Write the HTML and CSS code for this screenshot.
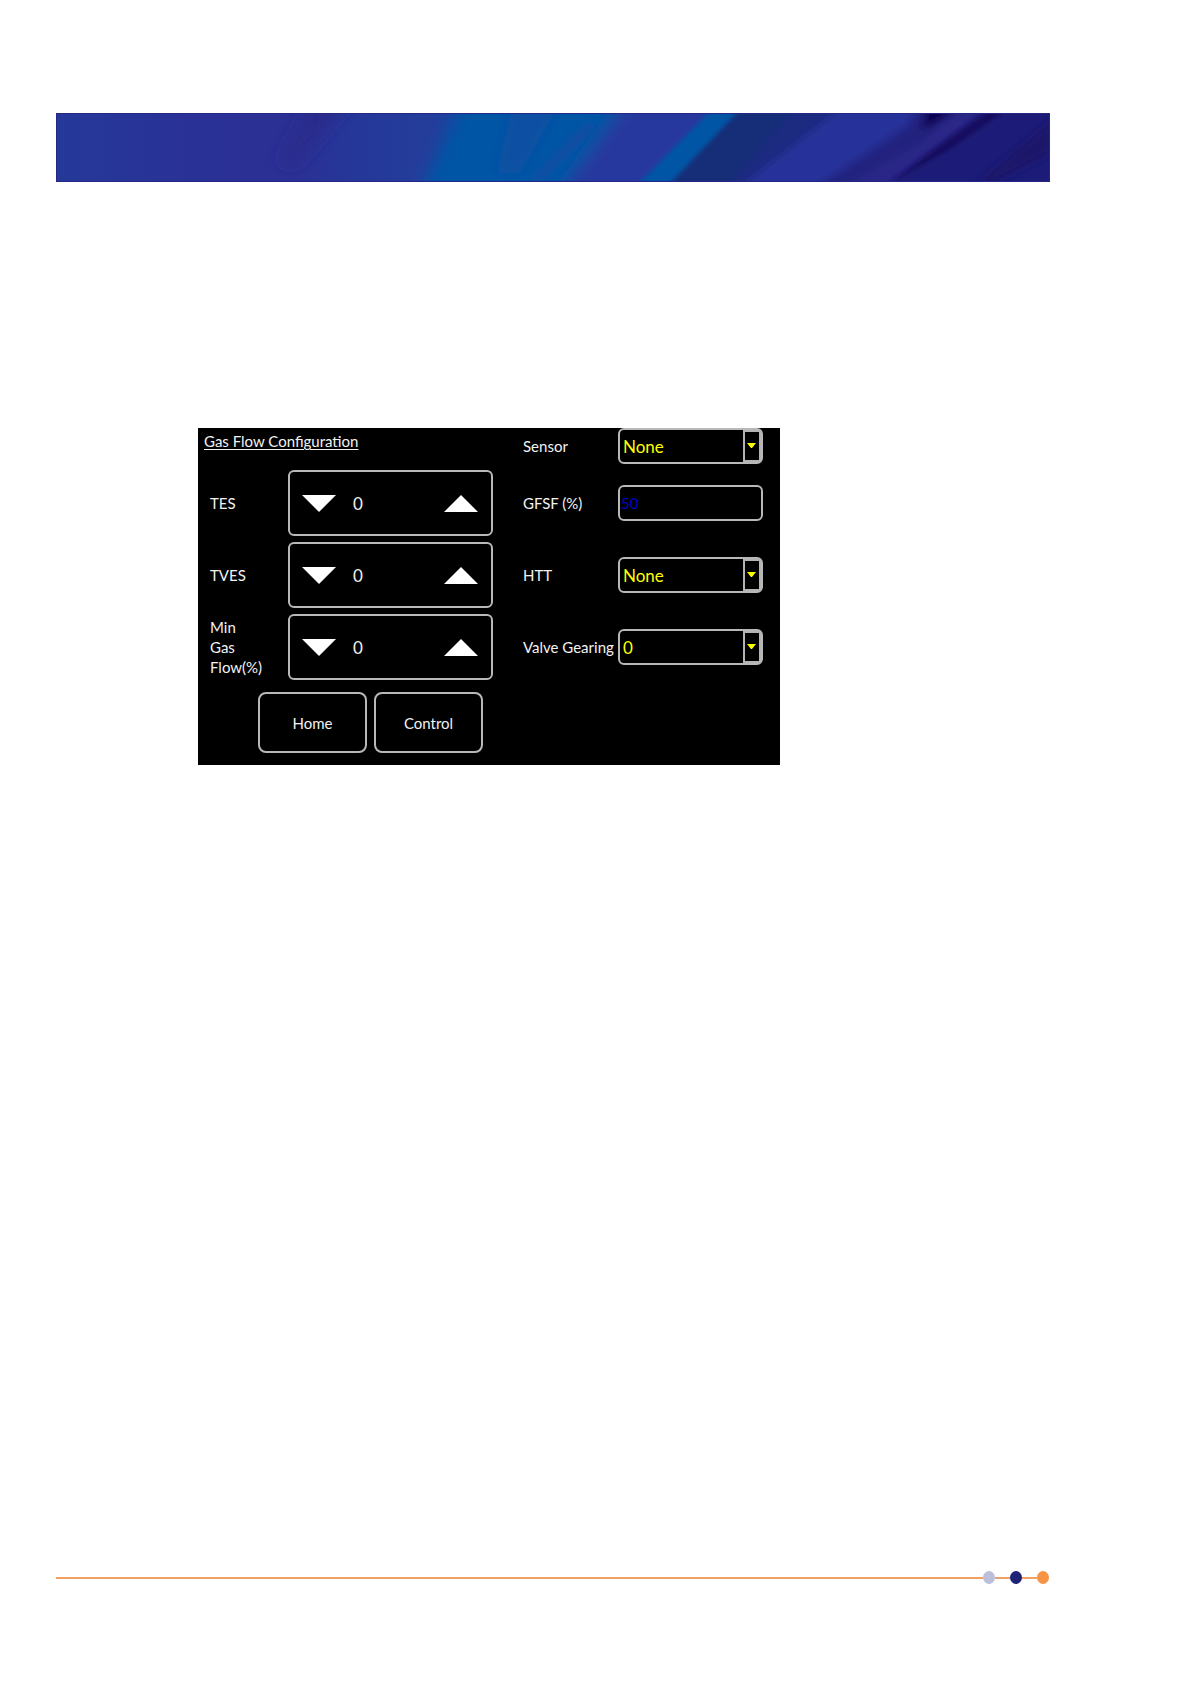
FILE: index.html
```html
<!DOCTYPE html>
<html lang="en">
<head>
<meta charset="utf-8">
<title>Gas Flow Configuration</title>
<link rel="stylesheet" href="styles.css">
</head>
<body>
<div class="page">
  <header class="banner">
    <svg class="banner-art" viewBox="0 0 994 69" preserveAspectRatio="none" aria-hidden="true">
      <defs>
        <linearGradient id="base" x1="0" x2="1" y1="0" y2="0">
          <stop offset="0" stop-color="#25389a"/>
          <stop offset=".14" stop-color="#2a3196"/>
          <stop offset=".24" stop-color="#2b3094"/>
          <stop offset=".3" stop-color="#253799"/>
          <stop offset=".37" stop-color="#243d9b"/>
          <stop offset=".5" stop-color="#0b4ea3"/>
          <stop offset=".6" stop-color="#273a9c"/>
          <stop offset=".75" stop-color="#222b88"/>
          <stop offset="1" stop-color="#1e1c75"/>
        </linearGradient>
        <filter id="soft" x="-20%" y="-60%" width="140%" height="220%"><feGaussianBlur stdDeviation="8"/></filter>
        <filter id="crisp" x="-20%" y="-60%" width="140%" height="220%"><feGaussianBlur stdDeviation="4"/></filter>
        <filter id="edge" x="-20%" y="-60%" width="140%" height="220%"><feGaussianBlur stdDeviation="2"/></filter>
      </defs>
      <rect width="994" height="69" fill="url(#base)"/>
      <g filter="url(#soft)">
        <path d="M262-20H300L240 50H224Z" fill="#2a2a8b"/>
        <path d="M410-20H590L490 89H360Z" fill="#0654a5"/>
        <path d="M460-20H510L464 60H440Z" fill="#084fa3"/>
        <path d="M576-20H680L582 89H500Z" fill="#25389d"/>
      </g>
      <g filter="url(#crisp)">
        <path d="M530 12L474 69H482L540 12Z" fill="#1b48a1"/>
        <path d="M682-16H790L686 85H595Z" fill="#132e78"/>
        <path d="M750-16H800L716 60L690 85H660Z" fill="#1c2c80"/>
        <path d="M800-16H900L770 85H670Z" fill="#28309a"/>
        <path d="M868-16L850 14L744 85H790L868 38L900-16Z" fill="#21207e"/>
        <path d="M872-16H922L866 18Z" fill="#0e0050"/>
        <path d="M904-8L868 28L780 77H840L934-8Z" fill="#2a2788"/>
      </g>
      <g filter="url(#edge)">
        <path d="M664-12H692L604 81H572Z" fill="#0055a4"/>
        <path d="M940-8L880 34L828 77H1004V-8Z" fill="#1d1f78"/>
        <path d="M940-8L880 34L830 72L892 38L958-8Z" fill="#170a60"/>
      </g>
      <g filter="url(#crisp)">
        <path d="M1000 4L950 46L920 72H934L994 40Z" fill="#1a1269"/>
      </g>
      <path d="M0 0H994V69H0Z" fill="none" stroke="#242783" stroke-width="2"/>
    </svg>
  </header>

  <main class="content">
    <form class="panel">
      <h1 class="title">Gas Flow Configuration</h1>
      <label class="label label-right" for="sensor">Sensor</label>
      <div class="select">
        <select id="sensor"><option>None</option></select>
        <svg class="arrow" viewBox="0 0 18 32" aria-hidden="true"><path d="M1 1H17V31H1Z"/><path class="tip" d="M4 13H13L9 18H8Z"/></svg>
      </div>

      <label class="label" for="tes">TES</label>
      <div class="spinner">
        <button type="button" aria-label="Decrease TES"><svg viewBox="0 0 34 17"><path d="M0 0H34L17 17Z"/></svg></button>
        <input id="tes" type="text" value="0">
        <button type="button" aria-label="Increase TES"><svg viewBox="0 0 34 17"><path d="M0 17H34L17 0Z"/></svg></button>
      </div>
      <label class="label label-right" for="gfsf">GFSF (%)</label>
      <input class="field" id="gfsf" type="text" value="50">

      <label class="label" for="tves">TVES</label>
      <div class="spinner">
        <button type="button" aria-label="Decrease TVES"><svg viewBox="0 0 34 17"><path d="M0 0H34L17 17Z"/></svg></button>
        <input id="tves" type="text" value="0">
        <button type="button" aria-label="Increase TVES"><svg viewBox="0 0 34 17"><path d="M0 17H34L17 0Z"/></svg></button>
      </div>
      <label class="label label-right" for="htt">HTT</label>
      <div class="select">
        <select id="htt"><option>None</option></select>
        <svg class="arrow" viewBox="0 0 18 32" aria-hidden="true"><path d="M1 1H17V31H1Z"/><path class="tip" d="M4 13H13L9 18H8Z"/></svg>
      </div>

      <label class="label" for="min-flow">Min<br>Gas<br>Flow(%)</label>
      <div class="spinner">
        <button type="button" aria-label="Decrease minimum gas flow"><svg viewBox="0 0 34 17"><path d="M0 0H34L17 17Z"/></svg></button>
        <input id="min-flow" type="text" value="0">
        <button type="button" aria-label="Increase minimum gas flow"><svg viewBox="0 0 34 17"><path d="M0 17H34L17 0Z"/></svg></button>
      </div>
      <label class="label label-right" for="gearing">Valve Gearing</label>
      <div class="select">
        <select id="gearing"><option>0</option></select>
        <svg class="arrow" viewBox="0 0 18 32" aria-hidden="true"><path d="M1 1H17V31H1Z"/><path class="tip" d="M4 13H13L9 18H8Z"/></svg>
      </div>

      <div class="actions">
        <button class="action" type="button">Home</button>
        <button class="action" type="button">Control</button>
      </div>
    </form>
  </main>

  <footer class="footer">
    <span class="line line-long"></span>
    <span class="dot dot-pale"></span>
    <span class="line"></span>
    <span class="dot dot-navy"></span>
    <span class="line"></span>
    <span class="dot dot-orange"></span>
  </footer>
</div>
</body>
</html>
```
FILE: styles.css
```css
* {
  box-sizing: border-box;
}

body {
  margin: 0;
  background: #fff;
  font-family: Lato, "Open Sans", sans-serif;
}

.page {
  display: flex;
  flex-direction: column;
  min-height: 100vh;
  padding: 113px 140px 100px 56px;
}

.banner {
  height: 69px;
}

.banner-art {
  display: block;
  width: 100%;
  height: 100%;
  overflow: hidden;
}

.content {
  flex: 1;
  padding: 246px 0 48px 142px;
}

/* Touch panel */
.panel {
  display: grid;
  grid-template-columns: 84px 205px 30px 95px 1fr;
  grid-template-rows: 36px repeat(3, 66px) auto;
  row-gap: 6px;
  align-items: center;
  max-width: 582px;
  padding: 0 17px 12px 6px;
  background: #000;
  color: #f2f2f2;
  font-size: 15px;
  line-height: 20px;
}

.title {
  grid-column: 1 / 3;
  align-self: start;
  margin: 3px 0 0;
  font-size: 15px;
  font-weight: 400;
  line-height: 20px;
  text-decoration: underline;
  text-underline-offset: 2px;
}

.label {
  padding-left: 6px;
}

.label-right {
  grid-column: 4;
  padding-left: 0;
  white-space: nowrap;
}

.panel input,
.panel select,
.panel button {
  margin: 0;
  background: #000;
  color: #f2f2f2;
  font-family: inherit;
  font-size: 15px;
}

.spinner {
  display: flex;
  align-items: center;
  height: 66px;
  padding: 0 13px 0 12px;
  border: 2px solid #b8b8b8;
  border-radius: 6px;
}

.spinner button {
  flex: none;
  width: 34px;
  padding: 0;
  border: 0;
}

.spinner svg {
  display: block;
  width: 100%;
  fill: #fff;
}

.spinner input {
  flex: 1;
  min-width: 0;
  padding: 0 0 0 17px;
  border: 0;
  font-size: 17px;
}

.select {
  position: relative;
}

.panel select,
.panel .field {
  display: block;
  width: 100%;
  height: 36px;
  padding: 0 24px 0 3px;
  border: 2px solid #b8b8b8;
  border-radius: 6px;
  color: #ff0;
  font-size: 17px;
  appearance: none;
}

.panel .field {
  padding-left: 1px;
  color: #0000c8;
  font-size: 15px;
}

.arrow {
  position: absolute;
  top: 2px;
  right: 2px;
  width: 18px;
  height: 32px;
  fill: none;
  stroke: #b4b4b4;
  stroke-width: 2;
  pointer-events: none;
}

.arrow .tip {
  fill: #ff0;
  stroke: none;
}

.actions {
  display: flex;
  grid-column: 1 / 3;
  justify-content: flex-end;
  gap: 7px;
  padding: 6px 10px 0 0;
}

.panel .action {
  width: 109px;
  height: 61px;
  border: 2px solid #b8b8b8;
  border-radius: 8px;
}

/* Page foot rule */
.footer {
  display: flex;
  align-items: center;
  padding-right: 1px;
}

.line {
  width: 15px;
  height: 2px;
  background: #f0a063;
}

.line-long {
  flex: 1;
}

.dot {
  width: 12px;
  height: 13px;
  border-radius: 50%;
}

.dot-pale {
  background: #bcbedb;
}

.dot-navy {
  background: #1e2376;
}

.dot-orange {
  background: #f79345;
}
```
